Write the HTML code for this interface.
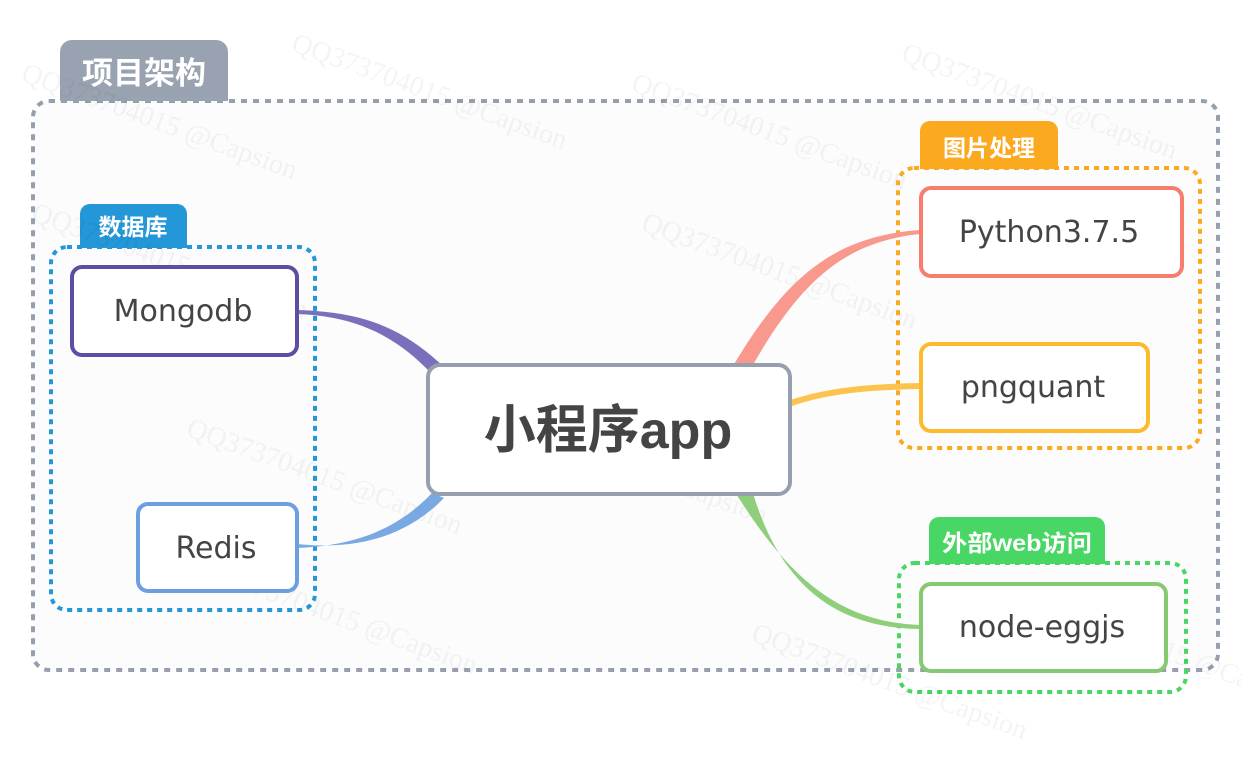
<!DOCTYPE html>
<html><head><meta charset="utf-8"><style>
html,body{margin:0;padding:0;background:#fff;width:1242px;height:772px;overflow:hidden}
svg{display:block;position:absolute;left:0;top:0}
.t{font-family:"DejaVu Sans","Noto Sans CJK SC",sans-serif}
.c{font-family:"Liberation Sans","Noto Sans CJK SC",sans-serif}
.wm{font-family:"Liberation Serif",serif;font-size:28px;fill:#000;opacity:.045}
</style></head><body>
<svg width="1242" height="772" viewBox="0 0 1242 772" xmlns="http://www.w3.org/2000/svg">
<rect x="33" y="101" width="1185" height="569" rx="16" fill="#fcfcfc" stroke="#959fae" stroke-width="4" stroke-dasharray="6 6"/>
<path d="M60 101 V52 a12 12 0 0 1 12 -12 H216 a12 12 0 0 1 12 12 V101 Z" fill="#98a2b1"/>
<text class="c" x="144" y="84" text-anchor="middle" font-size="31" font-weight="bold" fill="#fff">项目架构</text>

<rect x="51" y="247" width="264" height="363" rx="16" fill="none" stroke="#2397d8" stroke-width="4" stroke-dasharray="5 5"/>
<path d="M80 248 V214 a10 10 0 0 1 10 -10 H177 a10 10 0 0 1 10 10 V248 Z" fill="#2397d8"/>
<text class="c" x="133" y="235" text-anchor="middle" font-size="23" font-weight="bold" fill="#fff">数据库</text>

<rect x="898" y="168" width="302" height="280" rx="16" fill="none" stroke="#fba91f" stroke-width="4" stroke-dasharray="5 5"/>
<path d="M920 169 V131 a10 10 0 0 1 10 -10 H1048 a10 10 0 0 1 10 10 V169 Z" fill="#fba91f"/>
<text class="c" x="989" y="156" text-anchor="middle" font-size="23" font-weight="bold" fill="#fff">图片处理</text>

<rect x="899" y="563" width="287" height="129" rx="16" fill="none" stroke="#48d764" stroke-width="4" stroke-dasharray="5 5"/>
<path d="M929 564 V527 a10 10 0 0 1 10 -10 H1095 a10 10 0 0 1 10 10 V564 Z" fill="#48d764"/>
<text class="c" x="1017" y="551" text-anchor="middle" font-size="23" font-weight="bold" fill="#fff" textLength="150" lengthAdjust="spacingAndGlyphs">外部web访问</text>

<g class="wm">
<text x="20" y="80" transform="rotate(20 20 80)">QQ373704015 @Capsion</text>
<text x="290" y="50" transform="rotate(20 290 50)">QQ373704015 @Capsion</text>
<text x="630" y="90" transform="rotate(20 630 90)">QQ373704015 @Capsion</text>
<text x="900" y="60" transform="rotate(20 900 60)">QQ373704015 @Capsion</text>
<text x="30" y="220" transform="rotate(20 30 220)">QQ373704015 @Capsion</text>
<text x="640" y="230" transform="rotate(20 640 230)">QQ373704015 @Capsion</text>
<text x="185" y="435" transform="rotate(20 185 435)">QQ373704015 @Capsion</text>
<text x="490" y="425" transform="rotate(20 490 425)">QQ373704015 @Capsion</text>
<text x="200" y="575" transform="rotate(20 200 575)">QQ373704015 @Capsion</text>
<text x="750" y="640" transform="rotate(20 750 640)">QQ373704015 @Capsion</text>
<text x="1030" y="610" transform="rotate(20 1030 610)">QQ373704015 @Capsion</text>
</g>

<path d="M297 310 C360 312 400 325 445 368 L432 374 C395 335 355 316 297 314 Z" fill="#7a6fbb"/>
<path d="M297 548 C350 546 395 532 432 493 L444 498 C405 538 355 550 297 544 Z" fill="#7aa8e3"/>
<path d="M733 366 C790 270 840 236 920 230 L920 234 C845 242 800 280 749 372 Z" fill="#f9988c"/>
<path d="M790 400 C830 387 870 384 920 383 L920 389 C870 390 830 393 792 406 Z" fill="#fcc44f"/>
<path d="M735 492 C790 580 840 622 920 625 L920 629 C835 628 780 585 752 490 Z" fill="#8fcf7b"/>

<rect x="72" y="267" width="225" height="88" rx="10" fill="#fff" stroke="#5b4ea3" stroke-width="4"/>
<text class="t" x="183" y="321" text-anchor="middle" font-size="30" fill="#444">Mongodb</text>
<rect x="138" y="504" width="159" height="87" rx="10" fill="#fff" stroke="#6c9fe0" stroke-width="4"/>
<text class="t" x="216" y="558" text-anchor="middle" font-size="30" fill="#444">Redis</text>

<rect x="428" y="365" width="362" height="129" rx="12" fill="#fff" stroke="#959fae" stroke-width="4"/>
<text class="c" x="608" y="448" text-anchor="middle" font-size="52" font-weight="bold" fill="#444">小程序app</text>

<rect x="921" y="188" width="261" height="88" rx="10" fill="#fff" stroke="#f77d6c" stroke-width="4"/>
<text class="t" x="1049" y="242" text-anchor="middle" font-size="30" fill="#444">Python3.7.5</text>
<rect x="921" y="344" width="227" height="87" rx="10" fill="#fff" stroke="#fbbb2c" stroke-width="4"/>
<text class="t" x="1033" y="397" text-anchor="middle" font-size="30" fill="#444">pngquant</text>
<rect x="921" y="584" width="245" height="87" rx="10" fill="#fff" stroke="#87c872" stroke-width="4"/>
<text class="t" x="1042" y="637" text-anchor="middle" font-size="30" fill="#444">node-eggjs</text>
</svg>
</body></html>
